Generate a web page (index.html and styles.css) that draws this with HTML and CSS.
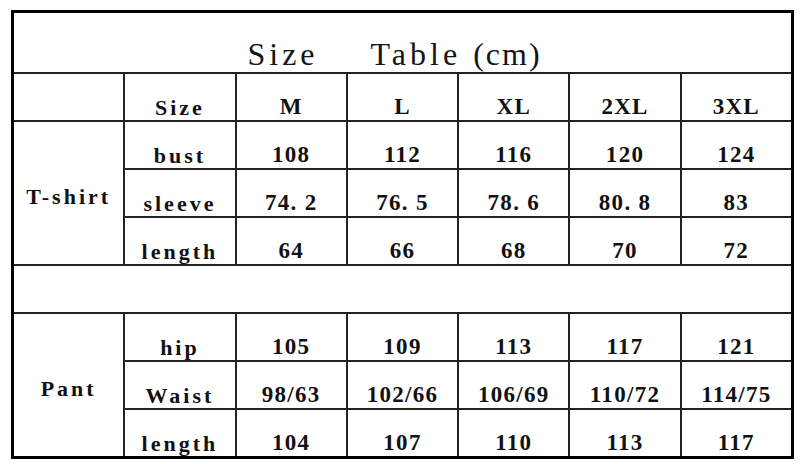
FILE: index.html
```html
<!DOCTYPE html>
<html>
<head>
<meta charset="utf-8">
<link rel="stylesheet" href="styles.css">
</head>
<body>
<div class="sheet">
  <div class="cell title span7"><span class="w1">Size</span><span class="w2">Table</span><span class="w3">(cm)</span></div>

  <div class="cell"></div>
  <div class="cell lbl">Size</div>
  <div class="cell num">M</div>
  <div class="cell num">L</div>
  <div class="cell num">XL</div>
  <div class="cell num">2XL</div>
  <div class="cell num">3XL</div>

  <div class="cell group span3r">T-shirt</div>
  <div class="cell lbl">bust</div>
  <div class="cell num">108</div>
  <div class="cell num">112</div>
  <div class="cell num">116</div>
  <div class="cell num">120</div>
  <div class="cell num">124</div>

  <div class="cell lbl">sleeve</div>
  <div class="cell num">74.&nbsp;2</div>
  <div class="cell num">76.&nbsp;5</div>
  <div class="cell num">78.&nbsp;6</div>
  <div class="cell num">80.&nbsp;8</div>
  <div class="cell num">83</div>

  <div class="cell lbl">length</div>
  <div class="cell num">64</div>
  <div class="cell num">66</div>
  <div class="cell num">68</div>
  <div class="cell num">70</div>
  <div class="cell num">72</div>

  <div class="cell span7"></div>

  <div class="cell group span3r">Pant</div>
  <div class="cell lbl">hip</div>
  <div class="cell num">105</div>
  <div class="cell num">109</div>
  <div class="cell num">113</div>
  <div class="cell num">117</div>
  <div class="cell num">121</div>

  <div class="cell lbl">Waist</div>
  <div class="cell num">98/63</div>
  <div class="cell num">102/66</div>
  <div class="cell num">106/69</div>
  <div class="cell num">110/72</div>
  <div class="cell num">114/75</div>

  <div class="cell lbl">length</div>
  <div class="cell num">104</div>
  <div class="cell num">107</div>
  <div class="cell num">110</div>
  <div class="cell num">113</div>
  <div class="cell num">117</div>
</div>
</body>
</html>
```

FILE: styles.css
```css
html, body {
  margin: 0;
  padding: 0;
  background: #ffffff;
}

body {
  padding: 10px 0 0 11px;
}

.sheet {
  width: 777px;
  display: grid;
  grid-template-columns: repeat(7, 1fr);
  grid-template-rows: 59px repeat(8, 46px);
  gap: 2px;
  background: #222222;
  border: 3px solid #000000;
}

.cell {
  background: #ffffff;
  display: flex;
  justify-content: center;
  align-items: flex-end;
  color: #111111;
}

.span7 {
  grid-column: 1 / span 7;
}

.span3r {
  grid-column: 1;
  grid-row: span 3;
}

.title {
  font-family: "Liberation Serif", "Times New Roman", serif;
  font-size: 32px;
  line-height: 36px;
  padding-right: 16px;
  color: #151515;
}

.title .w1 {
  letter-spacing: 4px;
}

.title .w2 {
  letter-spacing: 4px;
  margin-left: 52px;
}

.title .w3 {
  letter-spacing: 2px;
  margin-left: 12px;
}

.lbl,
.group {
  font-family: "Liberation Serif", "Times New Roman", serif;
  font-weight: bold;
  font-size: 22px;
  line-height: 25px;
  letter-spacing: 3px;
}

.group {
  align-items: center;
  padding-top: 6px;
}

.num {
  font-family: "Liberation Serif", "Times New Roman", serif;
  font-weight: bold;
  font-size: 23px;
  line-height: 26px;
  letter-spacing: 1.3px;
}
```
